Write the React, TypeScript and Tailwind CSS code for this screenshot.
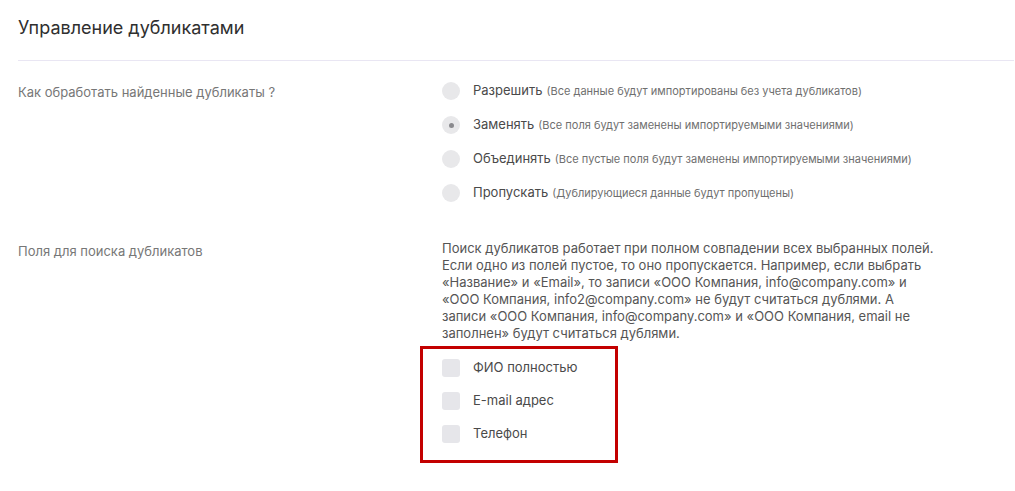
const options = [
  { label: "Разрешить", hint: "(Все данные будут импортированы без учета дубликатов)", checked: false },
  { label: "Заменять", hint: "(Все поля будут заменены импортируемыми значениями)", checked: true },
  { label: "Объединять", hint: "(Все пустые поля будут заменены импортируемыми значениями)", checked: false },
  { label: "Пропускать", hint: "(Дублирующиеся данные будут пропущены)", checked: false },
]

const fields = ["ФИО полностью", "E-mail адрес", "Телефон"]

export default function App() {
  return (
    <div className="w-[1015px] h-[491px] bg-white font-['Inter',sans-serif] pl-[18px]">
      {/* header */}
      <div className="pt-[16px] pb-[21px] border-b border-[#e9e6f3] mr-[1px]">
        <h1 className="text-[18px] leading-[23px] text-[#2f2f2f]">Управление дубликатами</h1>
      </div>

      {/* duplicates handling */}
      <div className="flex pt-[21px]">
        <div className="w-[424px] text-[13px] leading-[18px] text-[#777] pt-[1px]">
          Как обработать найденные дубликаты ?
        </div>
        <div className="flex flex-col gap-[16px]">
          {options.map((o) => (
            <label key={o.label} className="flex items-center h-[18px]">
              <span className="w-[18px] h-[18px] rounded-full bg-[#e8e8ea] flex items-center justify-center">
                {o.checked && <span className="w-[5px] h-[5px] rounded-full bg-[#8a8a8e]" />}
              </span>
              <span className="ml-[13px] text-[13px] text-[#4a4a4a]">{o.label}</span>
              <span className="ml-[4px] text-[11px] text-[#6f6f6f]">{o.hint}</span>
            </label>
          ))}
        </div>
      </div>

      {/* search fields */}
      <div className="flex pt-[38px]">
        <div className="w-[424px] text-[13px] leading-[18px] text-[#777] pt-[2px]">
          Поля для поиска дубликатов
        </div>
        <div className="flex flex-col">
          <p className="w-[494px] text-[13px] leading-[17px] text-[#555]">
            Поиск дубликатов работает при полном совпадении всех выбранных полей. Если одно из полей пустое, то оно пропускается. Например, если выбрать «Название» и «Email», то записи «ООО Компания, info@company.com» и «ООО Компания, info2@company.com» не будут считаться дублями. А записи «ООО Компания, info@company.com» и «ООО Компания, email не заполнен» будут считаться дублями.
          </p>
          <div className="mt-[4px] -ml-[22px] w-[198px] border-[3px] border-[#c30000] pl-[19px] pt-[10px] pb-[17px] flex flex-col gap-[15px]">
            {fields.map((f) => (
              <label key={f} className="flex items-center h-[18px]">
                <span className="w-[18px] h-[18px] rounded-[3px] bg-[#e6e6ea]" />
                <span className="ml-[13px] text-[13px] text-[#4a4a4a]">{f}</span>
              </label>
            ))}
          </div>
        </div>
      </div>
    </div>
  )
}
